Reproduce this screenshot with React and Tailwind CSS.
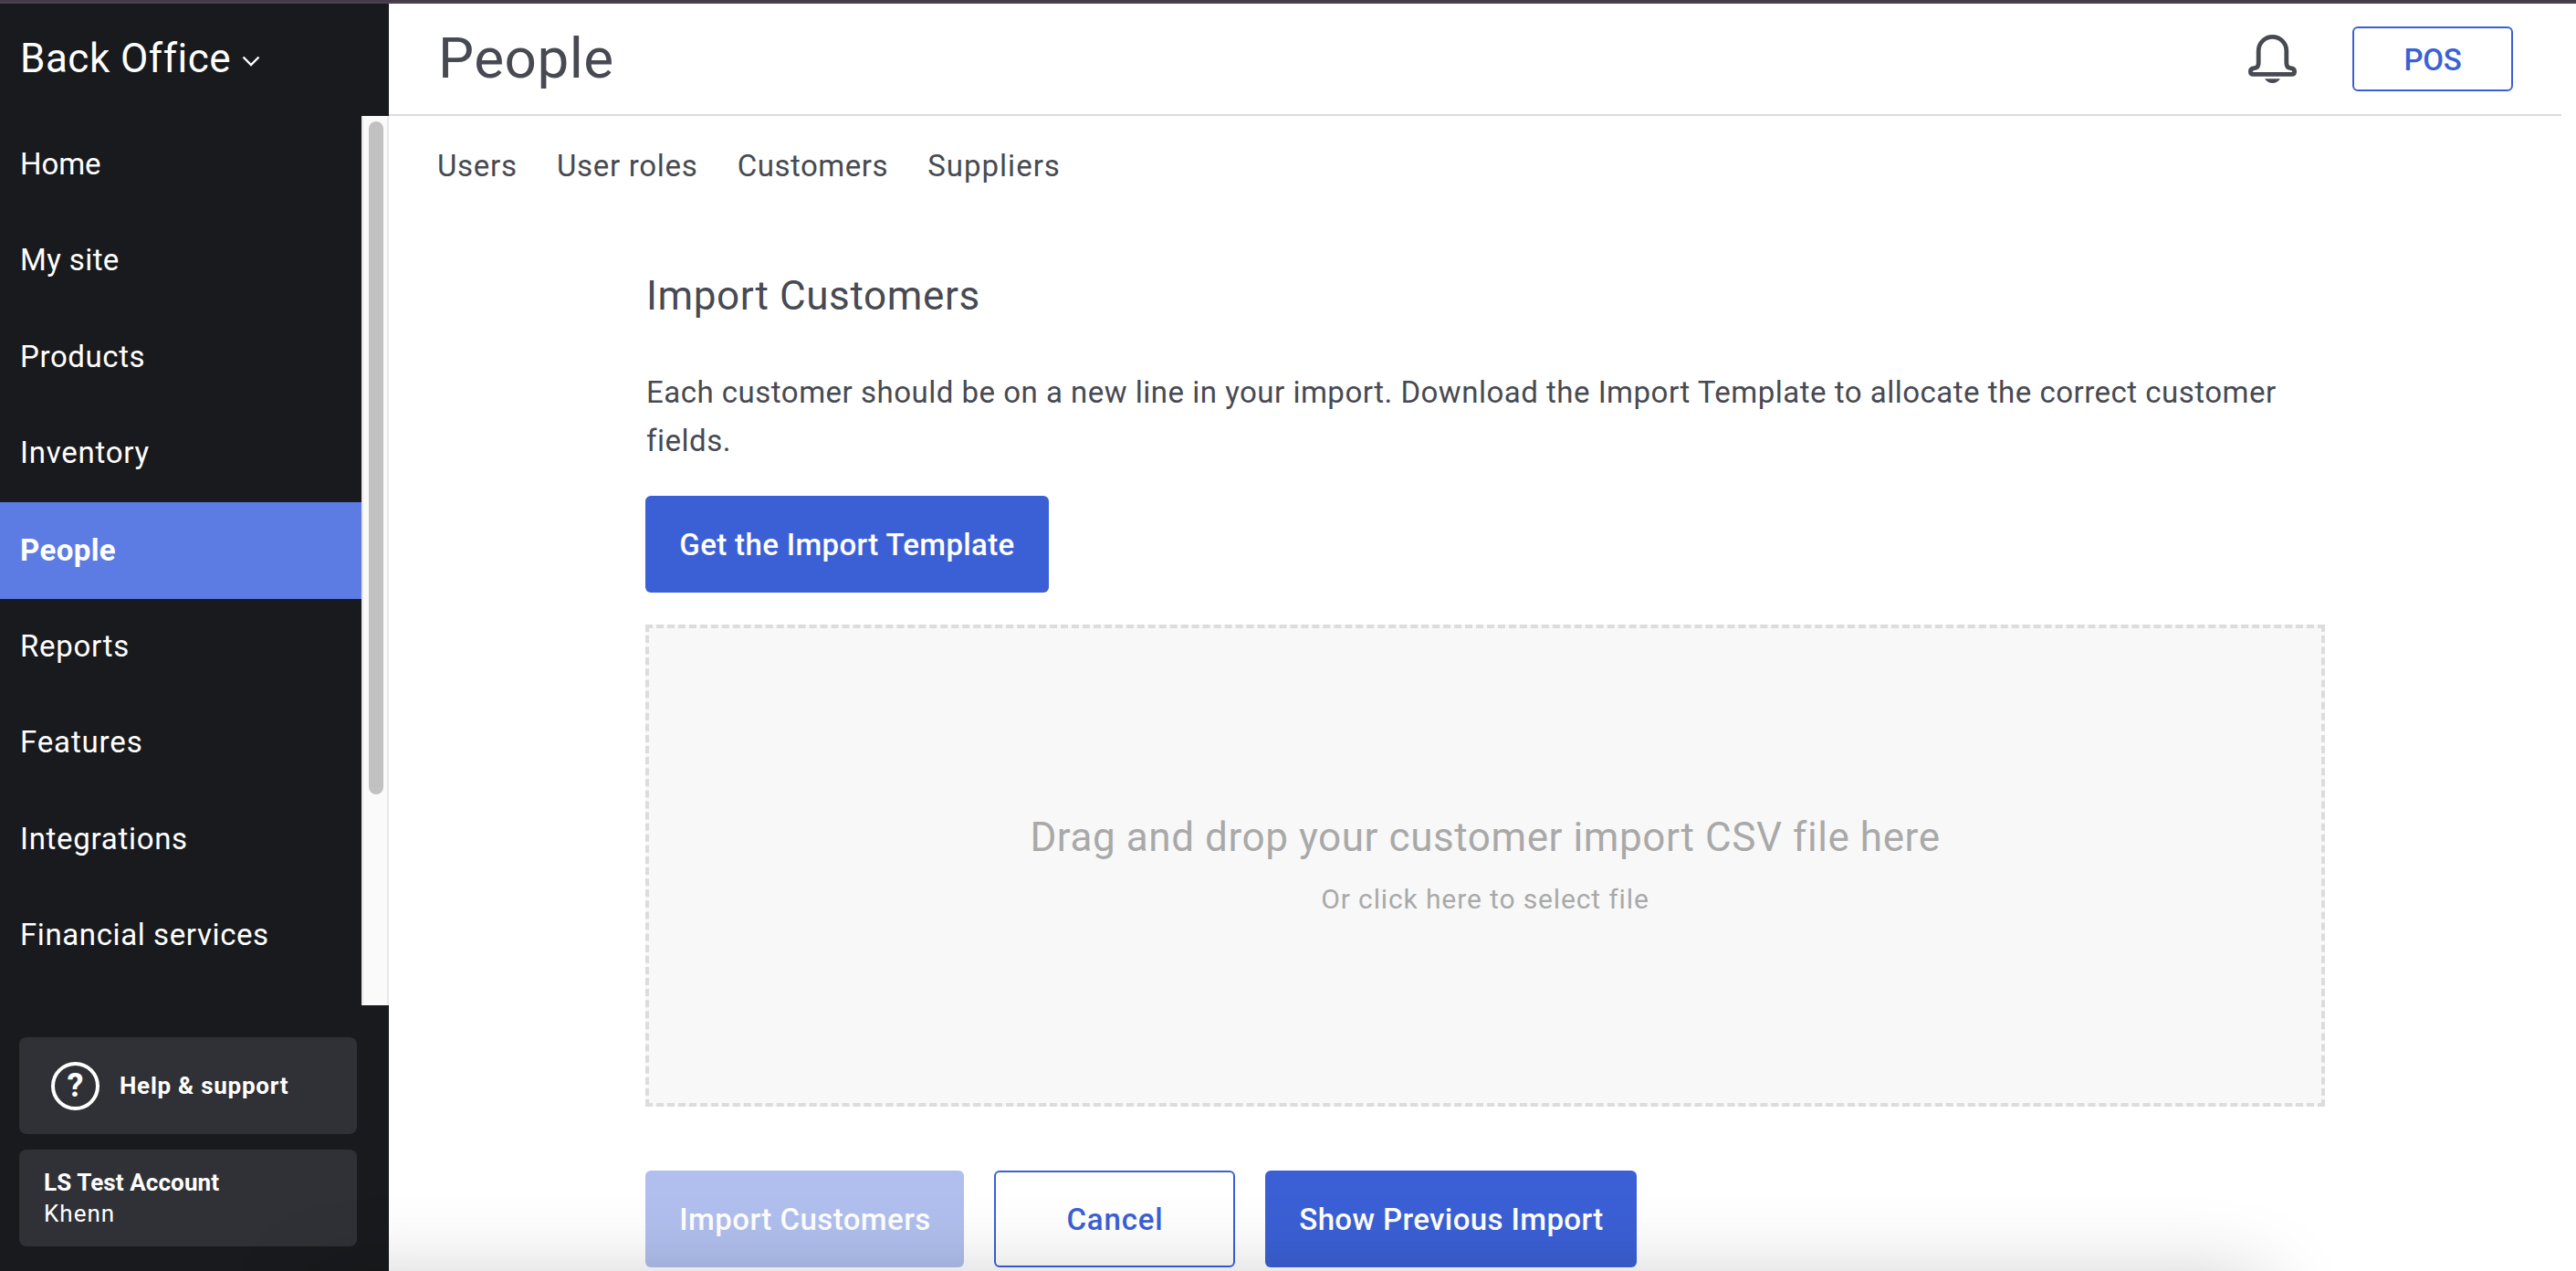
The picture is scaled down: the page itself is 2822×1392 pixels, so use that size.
import React from 'react';

const navItems = [
  { label: 'Home', tracking: 'tracking-[-0.1px]' },
  { label: 'My site', tracking: 'tracking-[0.4px]' },
  { label: 'Products', tracking: 'tracking-[0.6px]' },
  { label: 'Inventory', tracking: 'tracking-[0.75px]' },
  { label: 'People', tracking: 'tracking-[0.4px]', active: true },
  { label: 'Reports', tracking: 'tracking-[0.7px]' },
  { label: 'Features', tracking: 'tracking-[0.85px]' },
  { label: 'Integrations', tracking: 'tracking-[0.7px]' },
  { label: 'Financial services', tracking: 'tracking-[0.6px]' },
];

const tabs = [
  { label: 'Users', tracking: 'tracking-[0.7px]' },
  { label: 'User roles', tracking: 'tracking-[0.7px]' },
  { label: 'Customers', tracking: 'tracking-[0.5px]' },
  { label: 'Suppliers', tracking: 'tracking-[1px]' },
];

const BellIcon = () => (
  <svg width="53" height="53" viewBox="0 0 53 53" fill="none">
    <path
      d="M26.5 2.4C18 2.4 11.2 9.2 11.2 17.7V31C11.2 34.6 9.6 36.4 6.6 36.6C4 36.8 2.4 38.2 2.4 40.2C2.4 42.2 3.4 43.3 5.4 43.3H47.6C49.6 43.3 50.6 42.2 50.6 40.2C50.6 38.2 49 36.8 46.4 36.6C43.4 36.4 41.8 34.6 41.8 31V17.7C41.8 9.2 35 2.4 26.5 2.4Z"
      stroke="#474a52"
      strokeWidth="4.8"
      strokeLinejoin="round"
    />
    <path d="M18 48.3H35C33 51.4 30 53 26.5 53C23 53 20 51.4 18 48.3Z" fill="#474a52" />
  </svg>
);

const ChevronIcon = () => (
  <svg width="20" height="12" viewBox="0 0 20 12" fill="none">
    <path d="M1.5 1.5L10 10L18.5 1.5" stroke="#ffffff" strokeWidth="2.4" />
  </svg>
);

const Sidebar = () => (
  <aside className="w-[426px] shrink-0 flex flex-col bg-[#191a1d] text-white">
    <div className="h-[120px] mb-[3px] pl-[22px] flex items-center shrink-0">
      <span className="text-[44px] leading-[52px] tracking-[0.5px]">Back Office</span>
      <span className="ml-[12px] mt-[5px]">
        <ChevronIcon />
      </span>
    </div>

    <div className="flex h-[974px] shrink-0">
      <nav className="flex-1 pt-[0.6px] overflow-hidden">
        {navItems.map((item) => (
          <div
            key={item.label}
            className={`h-[105.6px] pl-[22px] flex items-center text-[33px] ${item.tracking} ${
              item.active ? 'bg-[#5c7ce3] font-bold' : 'pb-[2px]'
            }`}
          >
            {item.label}
          </div>
        ))}
      </nav>
      <div className="w-[30px] flex justify-center pt-[6px] bg-[#fafafa] border-x-2 border-[#e8e8e8]">
        <div className="w-4 h-[737px] ml-[2px] rounded-full bg-[#c1c1c1]"></div>
      </div>
    </div>

    <div className="pt-[35px] px-[21px] flex flex-col gap-[17px]">
      <div className="w-[370px] h-[106px] pl-[35px] flex items-center rounded-lg bg-[#303136]">
        <span className="w-[53px] h-[53px] flex items-center justify-center rounded-full border-[4.5px] border-white text-[36px] leading-none font-bold">
          ?
        </span>
        <span className="ml-[22px] text-[26px] font-bold tracking-[0.75px]">Help &amp; support</span>
      </div>
      <div className="w-[370px] h-[106px] pl-[27px] flex flex-col justify-center rounded-lg bg-[#303136] text-[26px] leading-[34px]">
        <span className="font-bold tracking-[0.1px]">LS Test Account</span>
        <span className="tracking-[1px]">Khenn</span>
      </div>
    </div>
  </aside>
);

const Header = () => (
  <header className="h-[123px] mr-4 pl-[54px] pr-[53px] pb-px flex items-center justify-between border-b-2 border-[#d9dce0]">
    <h1 className="text-[62px] leading-[72px] tracking-[0.5px]">People</h1>
    <div className="flex items-center gap-[61px]">
      <BellIcon />
      <button className="w-[176px] h-[71px] pt-[3px] rounded-md border-2 border-[#3b60d5] text-[#3b60d5] text-[33px] font-medium tracking-[-0.3px]">
        POS
      </button>
    </div>
  </header>
);

const ImportCustomers = () => (
  <section className="w-[1840px] ml-[281px] pt-[62px]">
    <h2 className="pl-px text-[44px] leading-[52px] tracking-[0.62px]">Import Customers</h2>
    <p className="mt-[53px] pl-px text-[33px] leading-[53px] tracking-[0.5px]">
      Each customer should be on a new line in your import. Download the Import Template to allocate the correct
      customer fields.
    </p>
    <button className="mt-[34px] w-[442px] h-[106px] pt-[2px] rounded-md bg-[#3b60d5] text-white text-[33px] font-medium tracking-[0.35px] block">
      Get the Import Template
    </button>

    <div className="mt-[35px] h-[528px] pt-[10px] flex flex-col items-center justify-center border-4 border-dashed border-[#dcdcdc] bg-[#f8f8f8] text-[#a9a9a9]">
      <div className="text-[44px] leading-[64px] tracking-[0.58px]">Drag and drop your customer import CSV file here</div>
      <div className="text-[30px] leading-[72px] tracking-[0.87px]">Or click here to select file</div>
    </div>

    <div className="mt-[70px] flex gap-[33px] text-[33px] font-medium">
      <button className="w-[349px] h-[106px] pt-[2px] pl-px rounded-md bg-[#b1bfee] text-white tracking-[0.45px]">
        Import Customers
      </button>
      <button className="w-[264px] h-[106px] pt-[2px] pl-px rounded-md border-2 border-[#3b60d5] bg-white text-[#3b60d5] tracking-[0.85px]">
        Cancel
      </button>
      <button className="w-[407px] h-[106px] pt-[2px] pl-px rounded-md bg-[#3b60d5] text-white tracking-[0.4px]">
        Show Previous Import
      </button>
    </div>
  </section>
);

const App = () => {
  return (
    <div className="relative w-[2822px] h-[1392px] flex flex-col overflow-hidden bg-white text-[#474a52] font-['Roboto',sans-serif]">
      <div className="h-1 shrink-0 bg-[#47444f] border-t-2 border-[#443a4b]"></div>
      <div className="flex flex-1 min-h-0">
        <Sidebar />
        <main className="flex-1">
          <Header />
          <nav className="h-[109px] pl-[53px] flex items-center gap-[43.3px] text-[33px]">
            {tabs.map((tab) => (
              <span key={tab.label} className={tab.tracking}>
                {tab.label}
              </span>
            ))}
          </nav>
          <ImportCustomers />
        </main>
      </div>

      {/* soft shadow rising from the bottom edge */}
      <div className="absolute left-[340px] top-[1402px] w-[2142px] h-[200px] rounded-[20px] shadow-[0_0_90px_rgba(0,0,0,0.21)] pointer-events-none"></div>
    </div>
  );
};

export default App;
